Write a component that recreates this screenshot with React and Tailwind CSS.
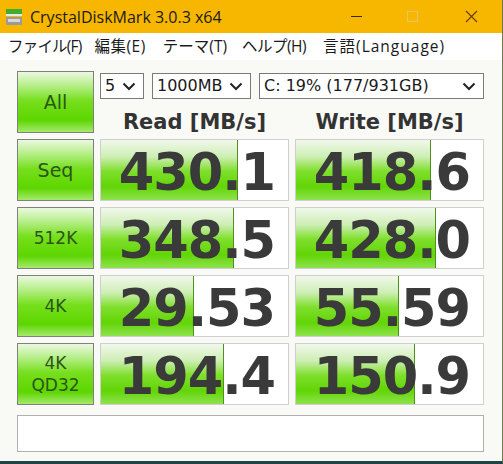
import React from "react";

const ui = { fontFamily: '"Open Sans", "Noto Sans CJK JP", sans-serif' };
const verdana = { fontFamily: '"DejaVu Sans", Verdana, sans-serif' };

const rows = [
  { label: ["Seq"], read: "430.1", rw: 137, write: "418.6", ww: 135 },
  { label: ["512K"], read: "348.5", rw: 133, write: "428.0", ww: 140 },
  { label: ["4K"], read: "29.53", rw: 93, write: "55.59", ww: 103 },
  { label: ["4K", "QD32"], read: "194.4", rw: 123, write: "150.9", ww: 119 },
];

const greenBar =
  "bg-[linear-gradient(to_bottom,#f1f8ec_0%,#cdeeb4_28%,#7fdf2c_52%,#62d506_78%,#8fe24e_100%)]";
const btnGreen =
  "bg-[linear-gradient(to_bottom,#eaf9df_0%,#b8ef8c_22%,#76df1c_48%,#5dd600_80%,#a4ea6c_100%)]";

function Chevron() {
  return (
    <svg width="14" height="9" viewBox="0 0 14 9">
      <polyline points="1.5,1.5 7,7 12.5,1.5" fill="none" stroke="#222" strokeWidth="2" />
    </svg>
  );
}

function Select({ w, text }) {
  return (
    <div
      className="h-[26px] border border-[#7a7a7a] bg-white flex items-center justify-between pl-[4px] pr-[7px] text-[16px] text-[#1a1a1a]"
      style={{ width: w, ...verdana }}
    >
      <span>{text}</span>
      <Chevron />
    </div>
  );
}

function GreenButton({ lines, comic }) {
  return (
    <div
      className={`h-[62px] border border-[#808080] ${btnGreen} flex flex-col items-center justify-center text-[#2b5518] leading-[22px]`}
      style={verdana}
    >
      {lines.map((l) => (
        <span key={l} className={comic ? "text-[19px]" : "text-[17px]"}>
          {l}
        </span>
      ))}
    </div>
  );
}

function Meter({ value, fill }) {
  return (
    <div className="relative h-[62px] border border-[#cfcfcf] bg-white overflow-hidden">
      <div
        className={`absolute left-0 top-0 bottom-0 ${greenBar} border-r border-[#4f8f1c]`}
        style={{ width: fill }}
      />
      <div
        className="relative h-full flex items-center justify-end pr-[13px] pt-[6px] text-[51px] font-bold text-[#3a3a3a] tracking-[-1px]"
        style={verdana}
      >
        {value}
      </div>
    </div>
  );
}

export default function App() {
  return (
    <div className="w-[503px] h-[464px] flex flex-col border-r border-[#6d7a48] border-b-[3px] border-b-[#1f4444] overflow-hidden" style={ui}>
      {/* title bar */}
      <div className="h-[33px] bg-[#f7b600] flex items-center shrink-0">
        <svg className="ml-[5px]" width="18" height="18" viewBox="0 0 18 18">
          <rect x="1" y="1" width="16" height="5" fill="#3fae2a" />
          <rect x="1" y="6" width="16" height="2" fill="#e8e8e8" />
          <rect x="1" y="9" width="16" height="8" fill="#9a9a9a" />
          <rect x="3" y="11" width="12" height="3" fill="#d8d8d8" />
        </svg>
        <span className="ml-[7px] text-[16px] text-[#1a1a1a]">CrystalDiskMark 3.0.3 x64</span>
        <div className="ml-auto flex items-center">
          <div className="w-[40px] flex justify-center">
            <div className="w-[11px] h-[1px] bg-[#3a2a00]" />
          </div>
          <div className="w-[72px] flex justify-center">
            <div className="w-[11px] h-[11px] border border-[#e5c468]" />
          </div>
          <div className="w-[46px] flex justify-center mr-[8px]">
            <svg width="13" height="13" viewBox="0 0 13 13">
              <path d="M1 1 L12 12 M12 1 L1 12" stroke="#6a3f10" strokeWidth="1.2" />
            </svg>
          </div>
        </div>
      </div>

      {/* menu */}
      <div className="h-[27px] bg-white flex items-center text-[15.5px] text-[#1a1a1a] shrink-0">
        <span className="ml-[8px] tracking-[-0.8px]">ファイル(F)</span>
        <span className="ml-[13px] tracking-[0.5px]">編集(E)</span>
        <span className="ml-[17px]">テーマ(T)</span>
        <span className="ml-[15px] tracking-[-0.5px]">ヘルプ(H)</span>
        <span className="ml-[17px] tracking-[1px]">言語(Language)</span>
      </div>

      {/* client */}
      <div className="flex-1 bg-[#f9faf6] pl-[17px] pt-[11px]">
        <div className="grid grid-cols-[77px_189px_189px] auto-rows-[62px] gap-x-[6px] gap-y-[6px]">
          <GreenButton lines={["All"]} comic />
          <div className="col-span-2 h-[62px] flex flex-col">
            <div className="flex gap-[8px] mt-[2px]">
              <Select w={44} text="5" />
              <Select w={99} text="1000MB" />
              <Select w={225} text="C: 19% (177/931GB)" />
            </div>
            <div className="flex mt-[10px] leading-[26px] text-[21px] font-bold text-[#333]" style={verdana}>
              <div className="w-[189px] text-center">Read [MB/s]</div>
              <div className="w-[6px]" />
              <div className="w-[189px] text-center">Write [MB/s]</div>
            </div>
          </div>
          {rows.map((r) => (
            <React.Fragment key={r.read}>
              <GreenButton lines={r.label} comic={r.label[0] === "Seq"} />
              <Meter value={r.read} fill={r.rw} />
              <Meter value={r.write} fill={r.ww} />
            </React.Fragment>
          ))}
        </div>
        <div className="mt-[10px] w-[467px] h-[37px] bg-white border border-[#b0b0b0]" />
      </div>
    </div>
  );
}
